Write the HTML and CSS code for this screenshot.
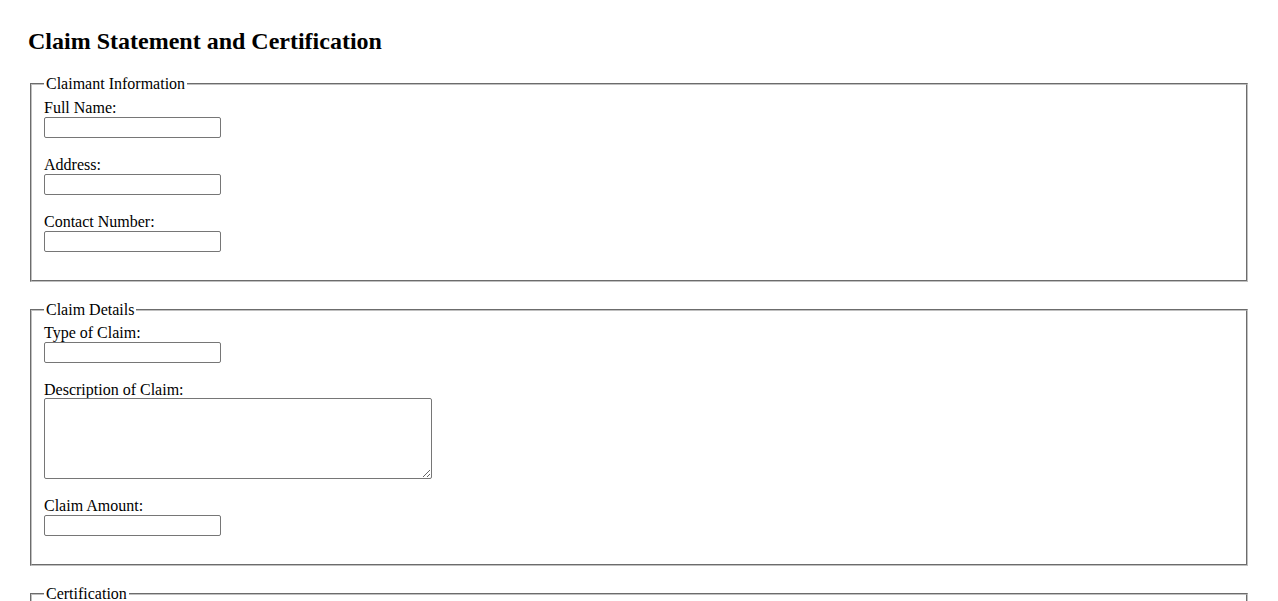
FILE: index.html
```html
<!DOCTYPE html>
<html lang="en">
<head>
<meta charset="utf-8">
<title>Claim Statement and Certification</title>
<link rel="stylesheet" href="styles.css">
</head>
<body>
<div class="page">
  <h2 class="title">Claim Statement and Certification</h2>
  <form>
    <fieldset class="group">
      <legend class="legend">Claimant Information</legend>
      <label class="label" for="name">Full Name:</label><br>
      <input class="field" type="text" id="name"><br><br>
      <label class="label" for="address">Address:</label><br>
      <input class="field" type="text" id="address"><br><br>
      <label class="label" for="contact">Contact Number:</label><br>
      <input class="field" type="text" id="contact"><br><br>
    </fieldset>
    <fieldset class="group">
      <legend class="legend">Claim Details</legend>
      <label class="label" for="type">Type of Claim:</label><br>
      <input class="field" type="text" id="type"><br><br>
      <label class="label" for="desc">Description of Claim:</label><br>
      <textarea class="area" id="desc"></textarea><br><br>
      <label class="label" for="amount">Claim Amount:</label><br>
      <input class="field" type="text" id="amount"><br><br>
    </fieldset>
    <fieldset class="group">
      <legend class="legend">Certification</legend>
      <label class="label" for="sig">Signature:</label><br>
      <input class="field" type="text" id="sig"><br><br>
      <label class="label" for="date">Date:</label><br>
      <input class="field" type="text" id="date"><br><br>
    </fieldset>
  </form>
</div>
</body>
</html>
```

FILE: styles.css
```css
body {
  margin: 8px;
  font-family: "Liberation Serif", "Times New Roman", serif;
  font-size: 16px;
  color: #000;
  background: #fff;
}
.page {
  padding: 19px 20px 20px 20px;
}
.title {
  font-size: 24px;
  font-weight: bold;
  margin: 0 0 20px 0;
  line-height: 28px;
}
.group {
  margin: 0 2px 19px 2px;
  padding: 5.6px 12px 10px 12px;
  border: 2px groove #c0c0c0;
}
.legend {
  padding: 0 2px;
}
.label {
  font-size: 16px;
}
.field {
  box-sizing: border-box;
  width: 177px;
  height: 21px;
  margin: 0;
  padding: 1px 2px;
  border: 1px solid #767676;
  border-radius: 2px;
  font-family: "Liberation Sans", Arial, sans-serif;
  font-size: 13.333px;
  background: #fff;
  vertical-align: baseline;
}
.area {
  box-sizing: border-box;
  width: 388px;
  height: 81px;
  margin: -1px 0 0 0;
  padding: 2px;
  border: 1px solid #767676;
  border-radius: 2px;
  font-family: "Liberation Mono", monospace;
  font-size: 13.333px;
  vertical-align: bottom;
}
```
